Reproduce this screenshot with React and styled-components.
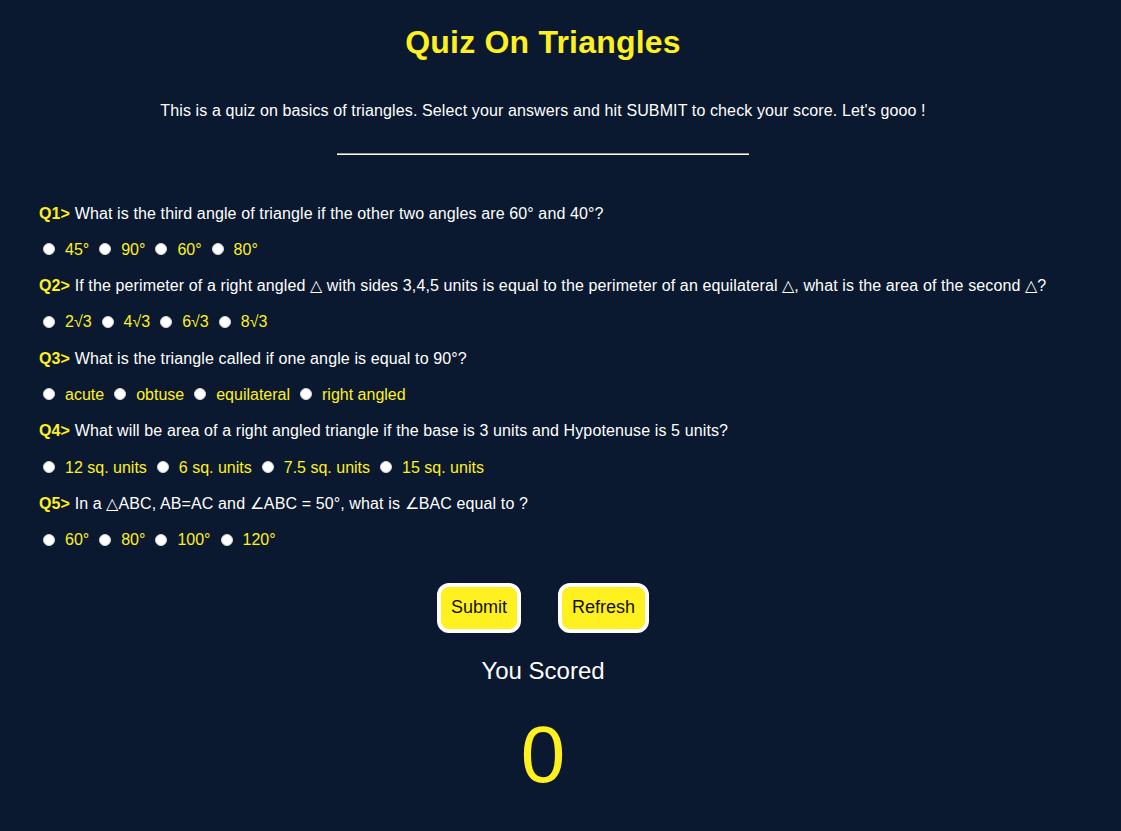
import React from "react";
import styled, { createGlobalStyle } from "styled-components";

const YELLOW = "#fff01f";

const questions = [
    {
        text: "What is the third angle of triangle if the other two angles are 60° and 40°?",
        options: ["45°", "90°", "60°", "80°"],
    },
    {
        text: "If the perimeter of a right angled △ with sides 3,4,5 units is equal to the perimeter of an equilateral △, what is the area of the second △?",
        options: ["2√3", "4√3", "6√3", "8√3"],
    },
    {
        text: "What is the triangle called if one angle is equal to 90°?",
        options: ["acute", "obtuse", "equilateral", "right angled"],
    },
    {
        text: "What will be area of a right angled triangle if the base is 3 units and Hypotenuse is 5 units?",
        options: ["12 sq. units", "6 sq. units", "7.5 sq. units", "15 sq. units"],
    },
    {
        text: "In a △ABC, AB=AC and ∠ABC = 50°, what is ∠BAC equal to ?",
        options: ["60°", "80°", "100°", "120°"],
    },
];

function App() {
    return (
        <>
            <GlobalStyle />
            <Page>
                <Header>
                    <Title>Quiz On Triangles</Title>
                    <Intro>
                        This is a quiz on basics of triangles. Select your answers and hit SUBMIT to
                        check your score. Let's gooo !
                    </Intro>
                    <Divider />
                </Header>

                <Form>
                    {questions.map((q, i) => (
                        <React.Fragment key={i}>
                            <Question>
                                <QLabel>Q{i + 1}&gt;</QLabel> {q.text}
                            </Question>
                            <Options>
                                {q.options.map((opt, j) => (
                                    <Option key={j}>
                                        <Radio type="radio" name={`q${i + 1}`} value={opt} />
                                        <OptionText>{opt}</OptionText>
                                    </Option>
                                ))}
                            </Options>
                        </React.Fragment>
                    ))}
                </Form>

                <Buttons>
                    <Button type="button">Submit</Button>
                    <Button type="button">Refresh</Button>
                </Buttons>

                <ScoreLabel>You Scored</ScoreLabel>
                <Score>0</Score>
            </Page>
        </>
    );
}

export default App;

const GlobalStyle = createGlobalStyle`
    html, body {
        margin: 0;
        background: #0a192f;
    }
    body {
        font-family: "Liberation Sans", Arial, sans-serif;
        color: #fff;
        min-height: 831px;
    }
`;

const Page = styled.div`
    display: flex;
    flex-direction: column;
    padding: 23.5px 35px 40px 0;
`;

const Header = styled.header`
    text-align: center;
`;

const Title = styled.h1`
    margin: 0;
    font-size: 32px;
    line-height: 37px;
    font-weight: bold;
    letter-spacing: 0.2px;
    color: ${YELLOW};
`;

const Intro = styled.p`
    margin: 41px 0 0;
    font-size: 16px;
    line-height: 18px;
    letter-spacing: 0.12px;
`;

const Divider = styled.hr`
    width: 412px;
    height: 0;
    margin: 33.5px auto 0;
    border: 0;
    border-top: 1px solid #9a9a9a;
    border-bottom: 1px solid #ffffff;
`;

const Form = styled.form`
    display: flex;
    flex-direction: column;
    gap: 18.3px;
    margin-top: 49.5px;
    padding-left: 39px;
    font-size: 16px;
    line-height: 18px;
`;

const Question = styled.p`
    margin: 0;
    color: #fff;
    letter-spacing: 0.12px;
`;

const QLabel = styled.span`
    font-weight: bold;
    color: ${YELLOW};
`;

const Options = styled.div`
    display: flex;
    align-items: center;
    padding-left: 4px;
`;

const Option = styled.label`
    display: flex;
    align-items: center;
    margin-right: 10px;
`;

const Radio = styled.input`
    appearance: none;
    width: 12px;
    height: 12px;
    margin: -1px 10px 0 0;
    border-radius: 50%;
    background: #fff;
    border: 1px solid #d4d7dc;
`;

const OptionText = styled.span`
    color: ${YELLOW};
`;

const Buttons = styled.div`
    display: flex;
    justify-content: center;
    gap: 37px;
    margin-top: 34px;
`;

const Button = styled.button`
    padding: 10px;
    border: 4px solid #fff;
    border-radius: 12px;
    background: ${YELLOW};
    color: #111;
    font-family: "Liberation Sans", Arial, sans-serif;
    font-size: 18px;
    line-height: 21.5px;
    cursor: pointer;
`;

const ScoreLabel = styled.div`
    margin-top: 24px;
    text-align: center;
    font-size: 24px;
    line-height: 28px;
`;

const Score = styled.div`
    margin-top: 24px;
    text-align: center;
    font-size: 80px;
    line-height: 92px;
    color: ${YELLOW};
`;
